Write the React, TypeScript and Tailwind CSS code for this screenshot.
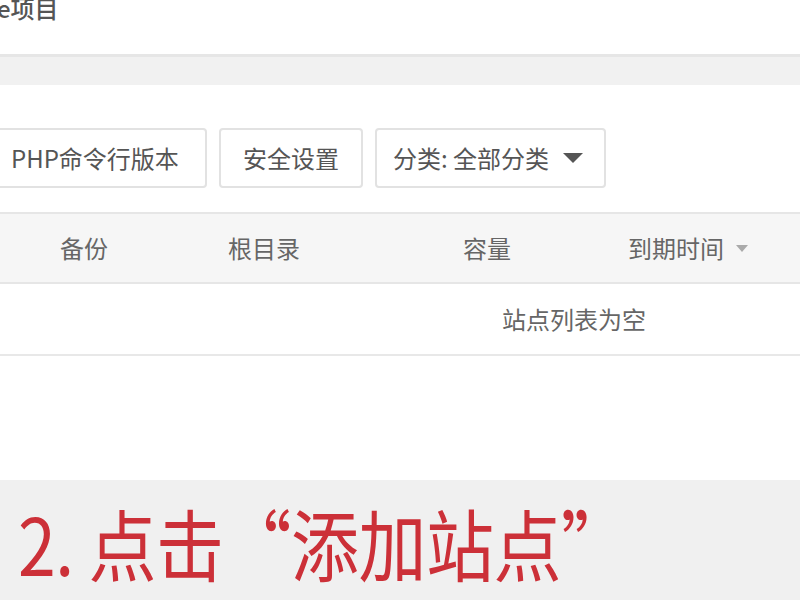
export default function App() {
  const font = { fontFamily: '"Noto Sans CJK SC", "Noto Sans", sans-serif' }
  return (
    <div className="w-[800px] h-[600px] overflow-hidden bg-white flex flex-col" style={font}>
      {/* page title, cut off at the top */}
      <div className="h-[54px] overflow-hidden">
        <div className="-mt-[9px] -ml-[3px] text-[24px] leading-[34px] font-medium text-[#555]">e项目</div>
      </div>
      <div className="h-[31px] border-t-[3px] border-[#e6e6e6] bg-[#f1f1f1]" />

      {/* toolbar */}
      <div className="mt-[43px] flex gap-[12px] -ml-[12px]">
        <button className="h-[60px] w-[219px] rounded-[4px] border-2 border-[#e2e2e2] bg-white text-[24px] text-[#555] flex items-center pl-[21px]">
          PHP命令行版本
        </button>
        <button className="h-[60px] w-[144px] rounded-[4px] border-2 border-[#e2e2e2] bg-white text-[24px] text-[#555] flex items-center justify-center">
          安全设置
        </button>
        <button className="h-[60px] w-[231px] rounded-[4px] border-2 border-[#e2e2e2] bg-white text-[24px] text-[#555] flex items-center pl-[16px] gap-[14px]">
          <span>分类: 全部分类</span>
          <span className="w-0 h-0 border-l-[10px] border-r-[10px] border-t-[10px] border-l-transparent border-r-transparent border-t-[#555]" />
        </button>
      </div>

      {/* table */}
      <div className="mt-[24px] h-[72px] border-y-2 border-[#e6e6e6] bg-[#f6f6f6] flex items-center text-[24px] text-[#666]">
        <span className="w-[228px] pl-[60px]">备份</span>
        <span className="w-[235px]">根目录</span>
        <span className="w-[165px]">容量</span>
        <span className="flex items-center gap-[12px]">
          到期时间
          <span className="w-0 h-0 border-l-[6px] border-r-[6px] border-t-[7px] border-l-transparent border-r-transparent border-t-[#aaa]" />
        </span>
      </div>
      <div className="h-[72px] border-b-2 border-[#e8e8e8] flex items-center pl-[502px] text-[24px] text-[#666]">
        站点列表为空
      </div>

      <div className="flex-1" />

      {/* instruction banner */}
      <div className="h-[120px] bg-[#f0f0f0] pl-[18px] pt-[10px]">
        <div className="text-[68px] leading-[90px] text-[#cc3038] tracking-[-0.5px] scale-y-[1.16] origin-top">
          2. 点击“添加站点”
        </div>
      </div>
    </div>
  )
}
